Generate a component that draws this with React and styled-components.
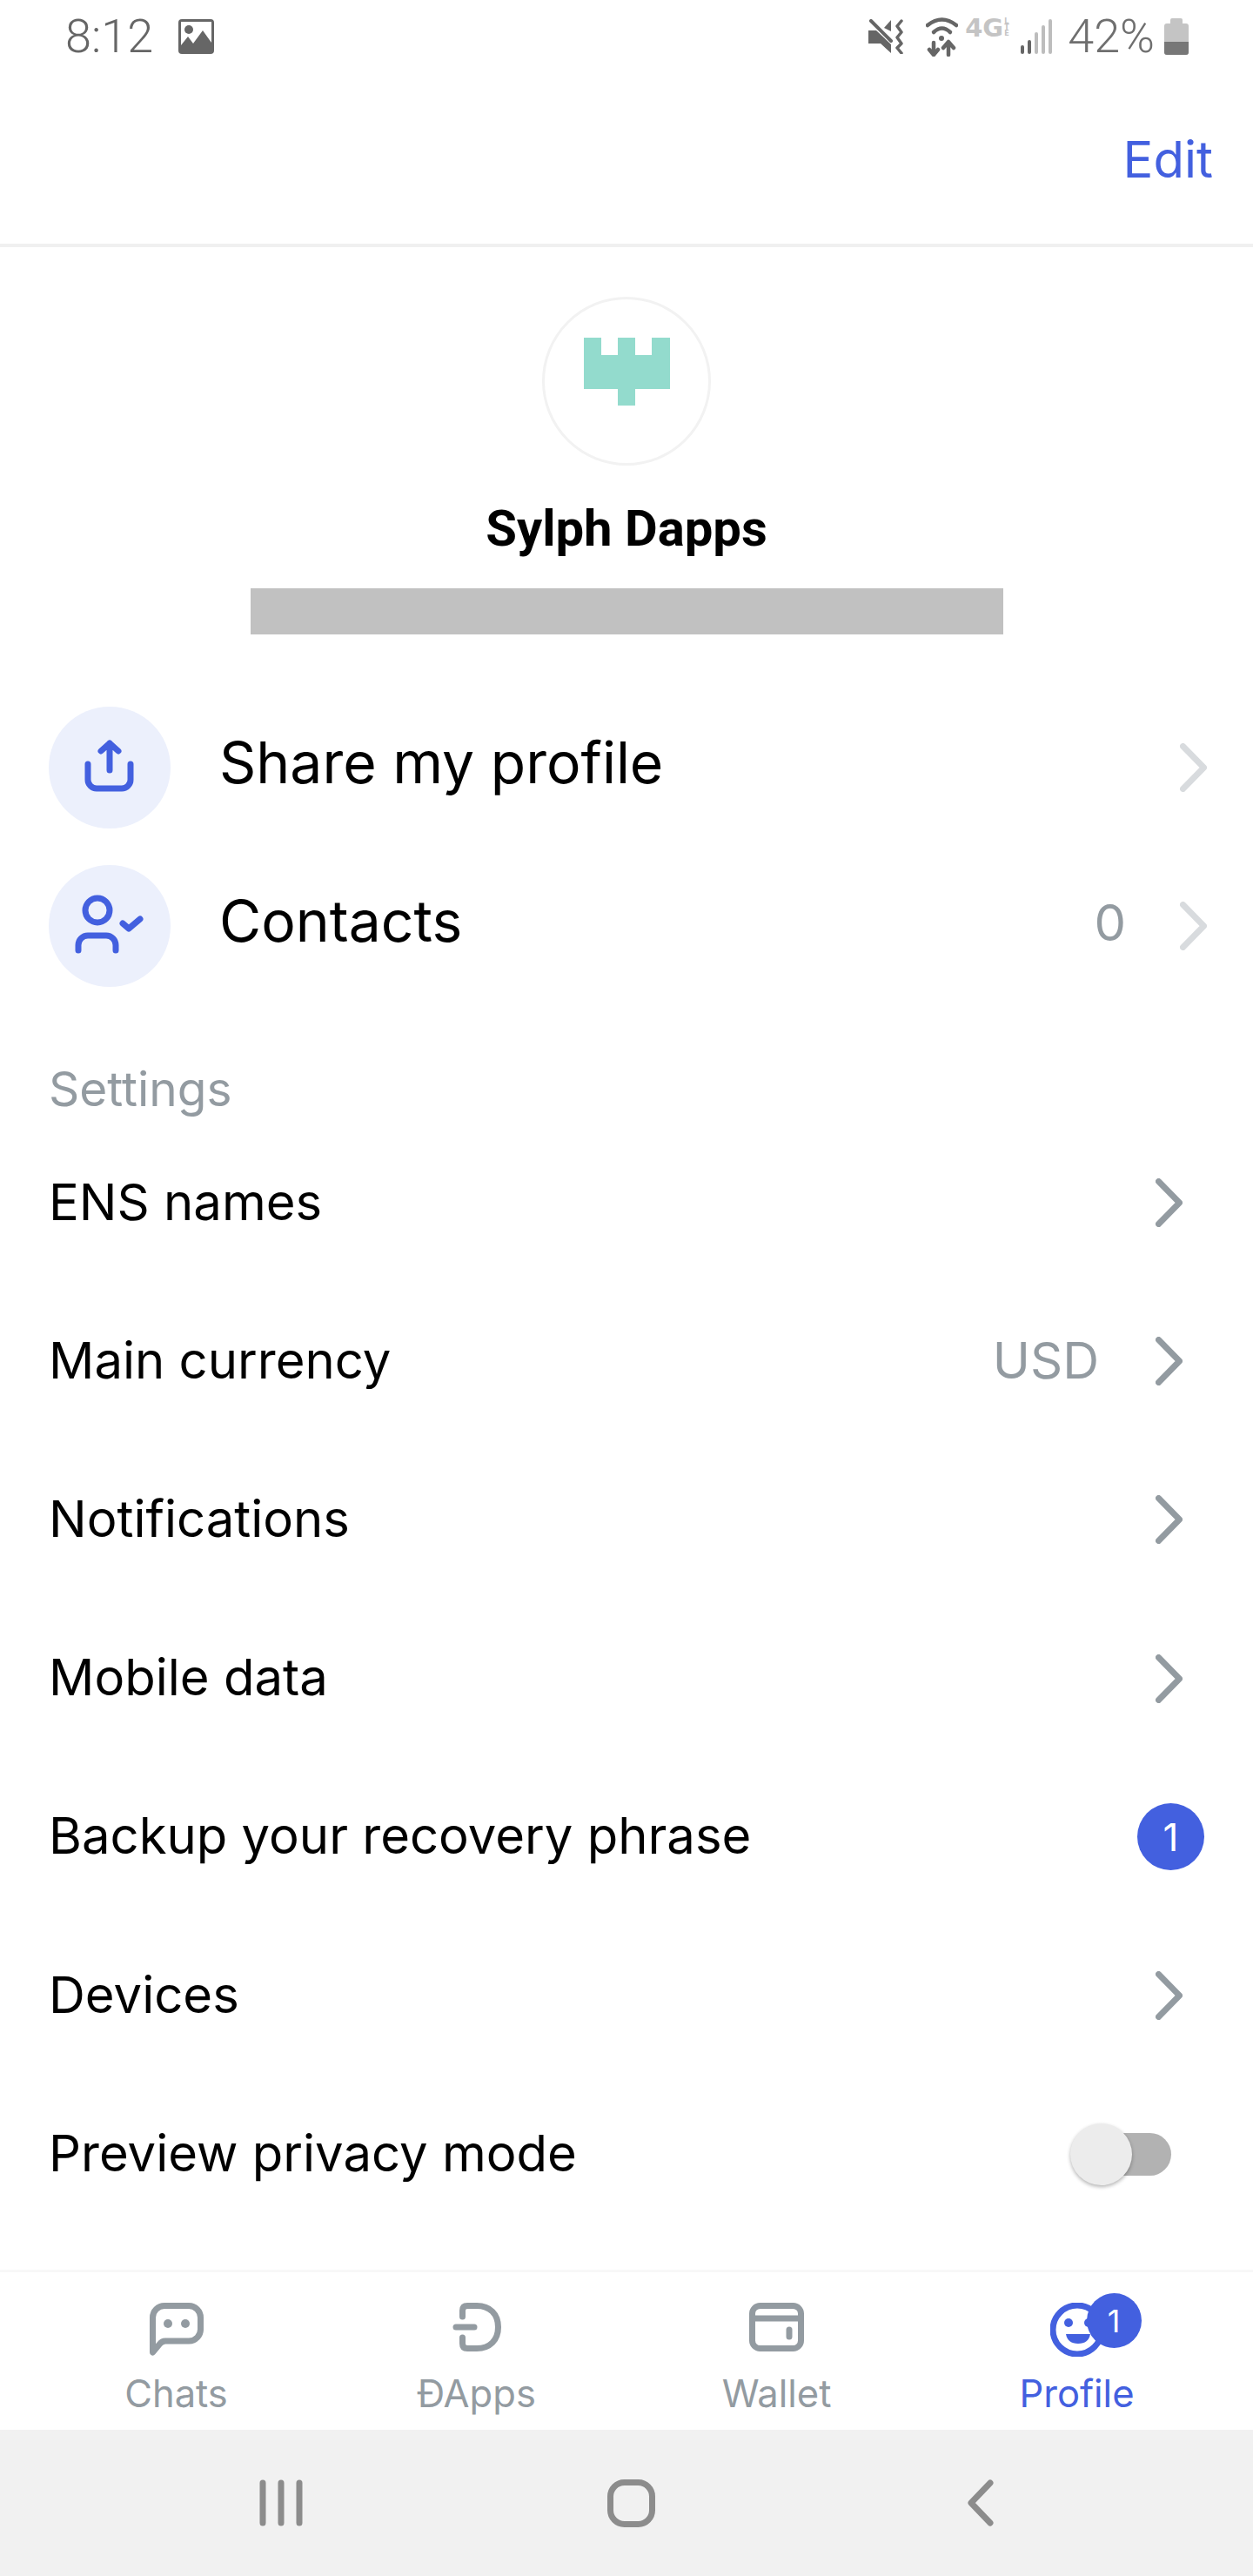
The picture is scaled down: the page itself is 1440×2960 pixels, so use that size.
import styled, { createGlobalStyle } from 'styled-components';

const GlobalStyle = createGlobalStyle`
  html, body {
    margin: 0;
    padding: 0;
    background: #fff;
  }
  body {
    font-family: Inter, "Noto Sans", sans-serif;
  }
`;

const Screen = styled.div`
  width: 1440px;
  height: 2960px;
  display: flex;
  flex-direction: column;
  background: #fff;
  overflow: hidden;
`;

// android status bar
const StatusBar = styled.div`
  height: 84px;
  flex: none;
  display: flex;
  align-items: center;
  justify-content: space-between;
  padding: 0 74px 0 75px;
  font-family: Roboto, sans-serif;
  font-size: 54px;
  font-weight: 300;
  color: #666;
`;

const StatusGroup = styled.div`
  display: flex;
  align-items: center;
  gap: ${(p) => p.$gap || 0}px;
`;

const Clock = styled.span`
  line-height: 84px;
`;

const Percent = styled.span`
  line-height: 84px;
  color: #6f6f6f;
  font-size: 54px;
  margin-left: 18px;
  margin-right: 11px;
`;

const Network = styled.span`
  display: flex;
  align-items: flex-start;
  height: 46px;
  margin-left: 8px;
  margin-right: 9px;
  font-family: "DejaVu Sans", sans-serif;
  font-size: 29px;
  line-height: 27px;
  font-weight: 700;
  color: #c4c4c4;
`;

const Lte = styled.span`
  width: 10px;
  font-size: 8px;
  line-height: 7px;
  margin-left: 1px;
  margin-top: 2px;
`;

const Toolbar = styled.header`
  height: 196px;
  flex: none;
  box-sizing: content-box;
  display: flex;
  align-items: center;
  justify-content: flex-end;
  padding-right: 46px;
  border-bottom: 4px solid #f0f0f0;
`;

const EditButton = styled.span`
  font-size: 58px;
  padding-top: 2px;
  color: #4360df;
`;

const Profile = styled.section`
  display: flex;
  flex-direction: column;
  align-items: center;
  padding-top: 57px;
`;

const Avatar = styled.div`
  width: 194px;
  height: 194px;
  box-sizing: border-box;
  border: 3px solid #f2f2f2;
  border-radius: 50%;
  display: flex;
  justify-content: center;
  padding-top: 44px;
`;

const Name = styled.h1`
  margin: 39px 0 0;
  font-family: Roboto, sans-serif;
  font-size: 58px;
  line-height: 66px;
  font-weight: 700;
  color: #000;
`;

const Redacted = styled.div`
  width: 865px;
  height: 53px;
  margin-top: 36px;
  background: #c1c1c1;
`;

const Actions = styled.div`
  margin-top: 62px;
`;

const ActionRow = styled.div`
  height: 182px;
  display: flex;
  align-items: center;
  padding: 0 53px 0 56px;
`;

const ActionIcon = styled.div`
  width: 140px;
  height: 140px;
  flex: none;
  border-radius: 50%;
  background: #ecf0fc;
  margin-right: 56px;
`;

const ActionLabel = styled.span`
  flex: 1;
  font-size: 66px;
  padding-bottom: 12px;
  color: #000;
`;

const SectionTitle = styled.div`
  margin: 72px 0 16px;
  padding-left: 56px;
  font-size: 55px;
  line-height: 48px;
  color: #939ba1;
`;

const SettingRow = styled.div`
  height: 182.2px;
  display: flex;
  align-items: center;
  padding: 0 81px 0 56px;
`;

const SettingLabel = styled.span`
  flex: 1;
  font-size: 58px;
  padding-bottom: 3px;
  color: #000;
`;

const Value = styled.span`
  font-size: 58px;
  padding-bottom: 3px;
  color: #939ba1;
  margin-right: 65px;
`;

const Count = styled.span`
  font-size: 58px;
  padding-bottom: 8px;
  color: #939ba1;
  margin-right: 62px;
`;

const Chevron = styled.svg`
  width: 31px;
  height: 56px;
  flex: none;
  fill: none;
  stroke: ${(p) => (p.$light ? '#d8dbde' : '#939ba1')};
  stroke-width: 7;
  stroke-linecap: round;
  stroke-linejoin: round;
`;

const Badge = styled.span`
  width: 77px;
  height: 77px;
  margin-right: -25px;
  border-radius: 50%;
  background: #4360df;
  color: #fff;
  font-size: 44px;
  display: flex;
  align-items: center;
  justify-content: center;
`;

const Toggle = styled.div`
  position: relative;
  width: 96px;
  height: 49px;
  margin-right: 13px;
  border-radius: 25px;
  background: #b2b2b2;
`;

const ToggleThumb = styled.div`
  position: absolute;
  left: -20px;
  top: -11px;
  width: 71px;
  height: 71px;
  border-radius: 50%;
  background: #ececec;
  box-shadow: 0 2px 4px rgba(0, 0, 0, 0.3);
`;

const TabBar = styled.nav`
  margin-top: auto;
  height: 184px;
  flex: none;
  box-sizing: border-box;
  display: grid;
  grid-template-columns: repeat(4, 1fr);
  padding: 35px 30px 0;
  border-top: 3px solid #f8f8f8;
`;

const Tab = styled.div`
  display: flex;
  flex-direction: column;
  align-items: center;
  color: ${(p) => (p.$active ? '#4360df' : '#939ba1')};
`;

const TabIcon = styled.div`
  position: relative;
  height: 62px;
  display: flex;
  justify-content: center;
  align-items: flex-start;
`;

const TabLabel = styled.span`
  margin-top: 15px;
  font-size: 43.5px;
  line-height: 54px;
`;

const TabBadge = styled.span`
  position: absolute;
  left: 42px;
  top: -11px;
  width: 63px;
  height: 63px;
  border-radius: 50%;
  background: #4360df;
  color: #fff;
  font-size: 36px;
  display: flex;
  align-items: center;
  justify-content: center;
`;

const SystemNav = styled.div`
  height: 168px;
  flex: none;
  background: #f1f1f1;
  display: grid;
  grid-template-columns: repeat(3, 1fr);
  align-items: center;
  justify-items: center;
  padding: 0 112px 0 122px;
  box-sizing: border-box;
`;

const NavIcon = styled.svg`
  fill: none;
  stroke: #8c8c8c;
  stroke-width: 7;
  stroke-linecap: round;
  stroke-linejoin: round;
`;

const BlueStroke = styled.svg`
  display: block;
  width: 140px;
  height: 140px;
  fill: none;
  stroke: #4360df;
  stroke-width: 7;
  stroke-linecap: round;
  stroke-linejoin: round;
`;

const TabSvg = styled.svg`
  display: block;
  fill: none;
  stroke: currentColor;
  stroke-width: 7;
  stroke-linecap: round;
  stroke-linejoin: round;
`;

function ChevronIcon({ light }) {
  return (
    <Chevron $light={light} viewBox="0 0 31 56">
      <path d="M3.5 3.5 L27.5 28 L3.5 52.5" />
    </Chevron>
  );
}

const settings = [
  { label: 'ENS names' },
  { label: 'Main currency', value: 'USD' },
  { label: 'Notifications' },
  { label: 'Mobile data' },
  { label: 'Backup your recovery phrase', badge: 1 },
  { label: 'Devices' },
  { label: 'Preview privacy mode', toggle: true },
];

export default function App() {
  return (
    <Screen>
      <GlobalStyle />
      <StatusBar>
        <StatusGroup $gap={29}>
          <Clock>8:12</Clock>
          <svg width="41" height="40" viewBox="0 0 41 40">
            <rect width="41" height="40" rx="4" fill="#666" />
            <rect x="3" y="3" width="35" height="31" fill="#fff" />
            <circle cx="12" cy="12" r="5" fill="#666" />
            <path d="M3 30 L11 20 L17 28 L28 13 L38 27 V36 H3 Z" fill="#666" />
          </svg>
        </StatusGroup>
        <StatusGroup>
          <svg width="41" height="40" viewBox="0 0 41 40">
            <path d="M0 13 H9 L26 29 V39 L14 28 H0 Z" fill="#666" />
            <path d="M3 2 L26 25" stroke="#666" strokeWidth="4" strokeLinecap="round" />
            <path d="M18 10 L26 1 V14 Z" fill="#666" />
            <path d="M38 2 L33 8 L38 15 L33 21 L38 28 L33 33 L38 39" fill="none" stroke="#666" strokeWidth="3.5" strokeLinecap="round" strokeLinejoin="round" />
          </svg>
          <svg width="37" height="46" viewBox="0 0 37 46" style={{ marginLeft: 25 }}>
            <g fill="none" stroke="#666" strokeWidth="4.5" strokeLinecap="round" strokeLinejoin="round">
              <path d="M2 10 Q18.5 -3 35 10" />
              <path d="M9 18 Q18.5 9 28 18" />
              <path d="M9 30 V44 M4 38 L9 44 L14 38" />
              <path d="M26 44 V30 M20 36 L26 29 L32 36" />
            </g>
            <circle cx="18" cy="25" r="3" fill="#666" />
          </svg>
          <Network>
            4G
            <Lte>L T E</Lte>
          </Network>
          <svg width="36" height="40" viewBox="0 0 36 40">
            <rect x="0" y="30" width="4" height="10" rx="2" fill="#666" />
            <rect x="8" y="24" width="4" height="16" rx="2" fill="#666" />
            <rect x="16" y="15" width="4" height="25" rx="2" fill="#bdbdbd" />
            <rect x="24" y="7" width="4" height="33" rx="2" fill="#bdbdbd" />
            <rect x="32" y="0" width="4" height="40" rx="2" fill="#bdbdbd" />
          </svg>
          <Percent>42%</Percent>
          <svg width="28" height="42" viewBox="0 0 28 42">
            <rect x="7" y="0" width="14" height="8" rx="2" fill="#c4c4c4" />
            <rect x="0" y="6" width="28" height="36" rx="3" fill="#c4c4c4" />
            <path d="M0 27 H28 V39 a3 3 0 0 1 -3 3 H3 a3 3 0 0 1 -3 -3 Z" fill="#777" />
          </svg>
        </StatusGroup>
      </StatusBar>
      <Toolbar>
        <EditButton>Edit</EditButton>
      </Toolbar>
      <Profile>
        <Avatar>
          <svg width="99" height="78" viewBox="0 0 99 78">
            <path d="M0 0 H20 V20 H39 V0 H59 V20 H78 V0 H99 V59 H59 V78 H39 V59 H0 Z" fill="#93dbcd" />
          </svg>
        </Avatar>
        <Name>Sylph Dapps</Name>
        <Redacted />
      </Profile>
      <Actions>
        <ActionRow>
          <ActionIcon>
            <BlueStroke viewBox="0 0 140 140">
              <path d="M45 66 V84 a10 10 0 0 0 10 10 H84 a10 10 0 0 0 10 -10 V66" />
              <path d="M70 42 V73 M60 51 L70 42 L80 51" />
            </BlueStroke>
          </ActionIcon>
          <ActionLabel>Share my profile</ActionLabel>
          <ChevronIcon light />
        </ActionRow>
        <ActionRow>
          <ActionIcon>
            <BlueStroke viewBox="0 0 140 140">
              <circle cx="56" cy="52" r="14" />
              <path d="M34 98 V92 a11 11 0 0 1 11 -11 H66 a11 11 0 0 1 11 11 V98" />
              <path d="M85 67 L92 73 L105 62" />
            </BlueStroke>
          </ActionIcon>
          <ActionLabel>Contacts</ActionLabel>
          <Count>0</Count>
          <ChevronIcon light />
        </ActionRow>
      </Actions>
      <SectionTitle>Settings</SectionTitle>
      <div>
        {settings.map((s) => (
          <SettingRow key={s.label}>
            <SettingLabel>{s.label}</SettingLabel>
            {s.value && <Value>{s.value}</Value>}
            {s.badge && <Badge>{s.badge}</Badge>}
            {s.toggle && (
              <Toggle>
                <ToggleThumb />
              </Toggle>
            )}
            {!s.badge && !s.toggle && <ChevronIcon />}
          </SettingRow>
        ))}
      </div>
      <TabBar>
        <Tab>
          <TabIcon>
            <TabSvg width="62" height="62" viewBox="0 0 62 62">
              <path d="M3.5 57 V17 a13.5 13.5 0 0 1 13.5 -13.5 H45 a13.5 13.5 0 0 1 13.5 13.5 V30 a13.5 13.5 0 0 1 -13.5 14 H18 Q14 44 11 48 Z" />
              <circle cx="21" cy="24" r="5" fill="currentColor" stroke="none" />
              <circle cx="41" cy="24" r="5" fill="currentColor" stroke="none" />
            </TabSvg>
          </TabIcon>
          <TabLabel>Chats</TabLabel>
        </Tab>
        <Tab>
          <TabIcon>
            <TabSvg width="56" height="56" viewBox="0 0 56 56">
              <path d="M11.5 16 V9 Q11.5 3.5 17 3.5 H28 C43 3.5 52.5 13 52.5 28 C52.5 43 43 52.5 28 52.5 H17 Q11.5 52.5 11.5 47 V40" />
              <path d="M4 28 H25" />
            </TabSvg>
          </TabIcon>
          <TabLabel>ÐApps</TabLabel>
        </Tab>
        <Tab>
          <TabIcon>
            <TabSvg width="63" height="56" viewBox="0 0 63 56">
              <rect x="3.5" y="3.5" width="56" height="49" rx="9" />
              <path d="M3.5 18 H59.5" />
              <path d="M46 31 V39" />
            </TabSvg>
          </TabIcon>
          <TabLabel>Wallet</TabLabel>
        </Tab>
        <Tab $active>
          <TabIcon>
            <TabSvg width="62" height="62" viewBox="0 0 62 62" strokeWidth="6">
              <circle cx="31" cy="31" r="28" />
              <circle cx="21" cy="23" r="5" fill="currentColor" stroke="none" />
              <circle cx="44" cy="23" r="5" fill="currentColor" stroke="none" />
              <path d="M18 36 H46 Q44 47 32 47 Q20 47 18 36 Z" fill="currentColor" stroke="none" />
            </TabSvg>
            <TabBadge>1</TabBadge>
          </TabIcon>
          <TabLabel>Profile</TabLabel>
        </Tab>
      </TabBar>
      <SystemNav>
        <NavIcon width="50" height="54" viewBox="0 0 50 54">
          <path d="M4 4 V50 M25 4 V50 M46 4 V50" />
        </NavIcon>
        <NavIcon width="55" height="55" viewBox="0 0 55 55">
          <rect x="3.5" y="3.5" width="48" height="48" rx="16" />
        </NavIcon>
        <NavIcon width="30" height="54" viewBox="0 0 30 54">
          <path d="M26 4 L4 27 L26 50" />
        </NavIcon>
      </SystemNav>
    </Screen>
  );
}
